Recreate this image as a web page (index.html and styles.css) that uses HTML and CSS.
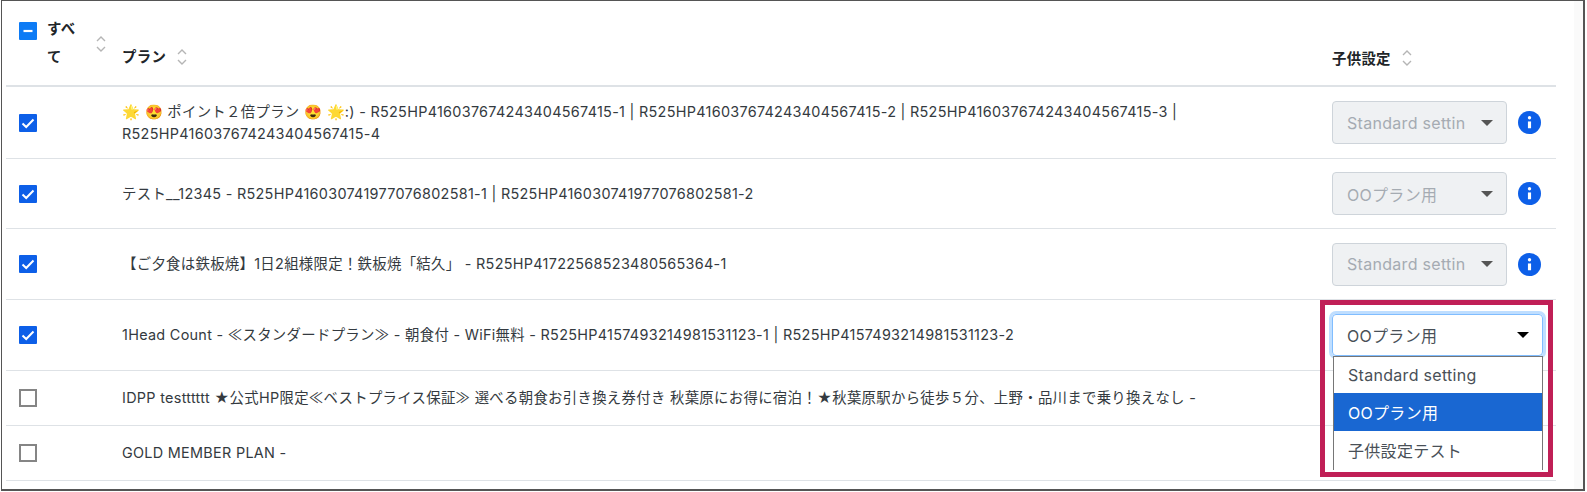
FILE: index.html
```html
<!DOCTYPE html>
<html lang="ja">
  <head>
    <meta charset="utf-8" />
    <title>プラン</title>
    <link rel="stylesheet" href="styles.css">
  </head>
  <body>
    <div class="frame">
      <div class="plans">
        <div class="row head">
          <div class="cell-check">
            <span class="box on"><svg width="18" height="18" viewBox="0 0 18 18"><path d="M4.5 9h9" stroke="#fff" stroke-width="2.2"/></svg></span>
            <span class="all">すべて</span>
            <svg class="sort sort-all" width="12" height="18" viewBox="0 0 12 18"><path d="M2 6l4-4 4 4M2 12l4 4 4-4" fill="none" stroke="#b5b5b5" stroke-width="1.4"/></svg>
          </div>
          <div class="cell-plan"><b>プラン</b><svg class="sort" width="12" height="18" viewBox="0 0 12 18"><path d="M2 6l4-4 4 4M2 12l4 4 4-4" fill="none" stroke="#b5b5b5" stroke-width="1.4"/></svg></div>
          <div class="cell-set"><b>子供設定</b><svg class="sort" width="12" height="18" viewBox="0 0 12 18"><path d="M2 6l4-4 4 4M2 12l4 4 4-4" fill="none" stroke="#b5b5b5" stroke-width="1.4"/></svg></div>
        </div>

        <div class="row first">
          <div class="cell-check"><span class="box on"><svg width="18" height="18" viewBox="0 0 18 18"><path d="M3.5 9.5l3.7 3.5 7.3-7.5" fill="none" stroke="#fff" stroke-width="2"/></svg></span></div>
          <div class="cell-plan">🌟 😍 ポイント２倍プラン 😍 🌟:) - R525HP416037674243404567415-1 | R525HP416037674243404567415-2 | R525HP416037674243404567415-3 | R525HP416037674243404567415-4</div>
          <div class="cell-set">
            <div class="select off">Standard settin<i class="caret"></i></div>
            <svg class="info" width="23" height="23" viewBox="0 0 22 22"><circle cx="11" cy="11" r="11" fill="#0d5fe8"/><circle cx="11" cy="6.5" r="1.6" fill="#fff"/><path d="M11 10v6.5" stroke="#fff" stroke-width="3"/></svg>
          </div>
        </div>

        <div class="row second">
          <div class="cell-check"><span class="box on"><svg width="18" height="18" viewBox="0 0 18 18"><path d="M3.5 9.5l3.7 3.5 7.3-7.5" fill="none" stroke="#fff" stroke-width="2"/></svg></span></div>
          <div class="cell-plan">テスト__12345 - R525HP416030741977076802581-1 | R525HP416030741977076802581-2</div>
          <div class="cell-set">
            <div class="select off">OOプラン用<i class="caret"></i></div>
            <svg class="info" width="23" height="23" viewBox="0 0 22 22"><circle cx="11" cy="11" r="11" fill="#0d5fe8"/><circle cx="11" cy="6.5" r="1.6" fill="#fff"/><path d="M11 10v6.5" stroke="#fff" stroke-width="3"/></svg>
          </div>
        </div>

        <div class="row tall">
          <div class="cell-check"><span class="box on"><svg width="18" height="18" viewBox="0 0 18 18"><path d="M3.5 9.5l3.7 3.5 7.3-7.5" fill="none" stroke="#fff" stroke-width="2"/></svg></span></div>
          <div class="cell-plan">【ご夕食は鉄板焼】1日2組様限定！鉄板焼「結久」 - R525HP41722568523480565364-1</div>
          <div class="cell-set">
            <div class="select off">Standard settin<i class="caret"></i></div>
            <svg class="info" width="23" height="23" viewBox="0 0 22 22"><circle cx="11" cy="11" r="11" fill="#0d5fe8"/><circle cx="11" cy="6.5" r="1.6" fill="#fff"/><path d="M11 10v6.5" stroke="#fff" stroke-width="3"/></svg>
          </div>
        </div>

        <div class="row tall">
          <div class="cell-check"><span class="box on"><svg width="18" height="18" viewBox="0 0 18 18"><path d="M3.5 9.5l3.7 3.5 7.3-7.5" fill="none" stroke="#fff" stroke-width="2"/></svg></span></div>
          <div class="cell-plan">1Head Count - ≪スタンダードプラン≫ - 朝食付 - WiFi無料 - R525HP4157493214981531123-1 | R525HP4157493214981531123-2</div>
          <div class="cell-set">
            <div class="select open">OOプラン用<i class="caret dark"></i></div>
          </div>
        </div>

        <div class="row short">
          <div class="cell-check"><span class="box"></span></div>
          <div class="cell-plan">IDPP testttttt ★公式HP限定≪ベストプライス保証≫ 選べる朝食お引き換え券付き 秋葉原にお得に宿泊！★秋葉原駅から徒歩５分、上野・品川まで乗り換えなし -</div>
          <div class="cell-set"></div>
        </div>

        <div class="row short">
          <div class="cell-check"><span class="box"></span></div>
          <div class="cell-plan">GOLD MEMBER PLAN -</div>
          <div class="cell-set"></div>
        </div>
      </div>
      <div class="strip"></div>

      <!-- dropdown and the red annotation lie over the table -->
      <div class="menu">
        <div class="opt">Standard setting</div>
        <div class="opt sel">OOプラン用</div>
        <div class="opt">子供設定テスト</div>
      </div>
      <div class="mark"></div>
    </div>
  </body>
</html>
```

FILE: styles.css
```css
html,
body {
  height: 100%;
  margin: 0;
  padding: 0;
  overflow: hidden;
  background: #fff;
}
.frame {
  position: relative;
  display: flex;
  justify-content: space-between;
  width: 1584px;
  height: 491px;
  margin-left: 1px;
  box-sizing: border-box;
  border: 1px solid #555;
  border-width: 1px 2px 2px 1px;
  font-family: 'Inter', 'Noto Sans CJK JP', sans-serif;
  font-size: 14.4px;
  letter-spacing: 0.3px;
  color: #343a40;
}
.plans {
  width: 1550px;
  margin-left: 4px;
}
.strip {
  width: 9px;
  background: #fafafa;
}
.row {
  display: flex;
  align-items: center;
  border-bottom: 1px solid #dee2e6;
}
.head {
  height: 84px;
  border-bottom-width: 2px;
  color: #212529;
}
.first {
  height: 71px;
}
.second {
  height: 69px;
}
.tall {
  height: 70px;
}
.short {
  height: 54px;
}
.cell-check {
  display: flex;
  align-items: center;
  width: 116px;
  padding-left: 13px;
  box-sizing: border-box;
  flex: none;
}
.cell-plan {
  flex: 1;
  line-height: 22px;
  padding-right: 20px;
}
.cell-set {
  display: flex;
  align-items: center;
  width: 224px;
  flex: none;
}
.head .cell-plan,
.head .cell-set {
  align-self: flex-end;
  padding-bottom: 17px;
  display: flex;
  align-items: center;
}
.box {
  display: block;
  width: 18px;
  height: 18px;
  box-sizing: border-box;
  border: 2px solid #858585;
  flex: none;
}
.box svg {
  display: block;
}
.box.on {
  border: 0;
  background: #0d5fe8;
  border-radius: 1px;
}
.head .box.on {
  background: #0d7bf5;
  margin-top: -25px;
}
.all {
  width: 30px;
  margin-left: 10px;
  font-weight: 700;
  line-height: 28px;
  color: #212529;
}
.sort {
  margin-left: 10px;
}
.sort-all {
  margin-left: 18px;
  margin-top: 2px;
}
.select {
  display: flex;
  align-items: center;
  justify-content: space-between;
  width: 175px;
  height: 43px;
  box-sizing: border-box;
  padding: 0 13px 0 14px;
  border: 1px solid #ced4da;
  border-radius: 4px;
  font-size: 16px;
  white-space: nowrap;
}
.select.off {
  background: #eff1f3;
  color: #a5abb2;
}
.select.open {
  width: 211px;
  height: 42px;
  border-color: #80bdff;
  box-shadow: 0 0 0 3px #bfdeff;
  color: #495057;
}
.caret {
  width: 0;
  height: 0;
  border-left: 6px solid transparent;
  border-right: 6px solid transparent;
  border-top: 6px solid #555;
}
.caret.dark {
  border-top-color: #000;
}
.info {
  margin-left: 11px;
}
.menu {
  position: absolute;
  left: 1331px;
  top: 355px;
  width: 210px;
  height: 114px;
  overflow: hidden;
  box-sizing: border-box;
  background: #fff;
  border: 1px solid #767676;
  border-bottom: 0;
  font-size: 16px;
  color: #495057;
}
.opt {
  height: 38px;
  line-height: 41px;
  padding-left: 14px;
}
.opt:first-child {
  margin-top: -2px;
}
.opt.sel {
  background: #1967d2;
  color: #fff;
}
.mark {
  position: absolute;
  left: 1318px;
  top: 299px;
  width: 233px;
  height: 177px;
  box-sizing: border-box;
  border: 5px solid #c01f56;
}
```
